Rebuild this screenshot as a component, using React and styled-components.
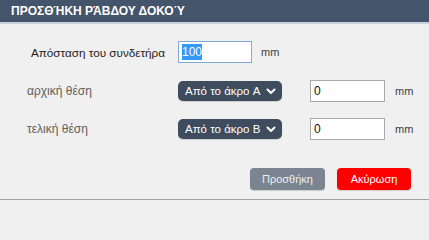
import React from "react";
import styled, { createGlobalStyle } from "styled-components";

const Global = createGlobalStyle`
  html, body { margin: 0; padding: 0; background: #f0f0f0; }
  body { font-family: "Liberation Sans", Arial, sans-serif; }
  * { box-sizing: border-box; }
`;

const Dialog = styled.div`
  width: 429px;
  height: 200px;
  background: #f0f0f0;
  display: flex;
  flex-direction: column;
  border-bottom: 1px solid #a3a3a3;
`;

const Header = styled.div`
  height: 24px;
  flex: none;
  background: #44546a;
  border-bottom: 2px solid #c9d1db;
  color: #ffffff;
  font-weight: bold;
  font-size: 12px;
  padding-left: 11px;
  display: flex;
  align-items: center;
  padding-bottom: 1px;
`;

const Body = styled.div`
  flex: 1;
  display: flex;
  flex-direction: column;
  padding-top: 17px;
`;

const Row = styled.div`
  display: flex;
  align-items: center;
  height: 22px;
  flex: none;
  margin-bottom: ${(p) => p.$gap}px;
`;

const Label = styled.div`
  width: 178px;
  padding-left: ${(p) => (p.$primary ? 31 : 27)}px;
  font-size: ${(p) => (p.$primary ? 11.7 : 12)}px;
  color: ${(p) => (p.$primary ? "#1e1e1e" : "#5e5e5e")};
`;

const Field = styled.div`
  width: ${(p) => p.$w}px;
  height: 22px;
  background: #ffffff;
  border: 1px solid ${(p) => (p.$focused ? "#7fa9d9" : "#a9a9a9")};
  display: flex;
  align-items: center;
  padding-left: 3px;
  font-size: 12px;
  color: #111;
`;

const Selected = styled.span`
  background: #3399ff;
  color: #ffffff;
  padding: 1px 0;
  line-height: 14px;
`;

const Unit = styled.span`
  font-size: 11px;
  color: #3c3c3c;
  margin-left: ${(p) => p.$ml}px;
`;

const Select = styled.div`
  width: 104px;
  height: 20px;
  background: #3e4c5e;
  border-radius: 5px;
  color: #ffffff;
  font-size: 11.5px;
  display: flex;
  align-items: center;
  justify-content: space-between;
  padding: 0 6px 0 7px;
  margin-right: 28px;
  box-shadow: 0 1px 1px rgba(0, 0, 0, 0.15);
`;

const Footer = styled.div`
  display: flex;
  justify-content: flex-end;
  gap: 12px;
  padding-right: 18px;
  margin-top: 28px;
`;

const Button = styled.button`
  width: ${(p) => p.$w}px;
  height: 22px;
  flex: none;
  border: none;
  border-radius: 4px;
  font-family: "Liberation Sans", Arial, sans-serif;
  font-size: 11px;
  color: ${(p) => (p.$danger ? "#ffffff" : "#eef0f2")};
  background: ${(p) => (p.$danger ? "#ff0000" : "#7b8591")};
  box-shadow: 0 1px 1px rgba(0, 0, 0, 0.15);
  padding: 0;
`;

const Chevron = () => (
  <svg width="10" height="7" viewBox="0 0 10 7">
    <path d="M1.5 1.5 L5 5 L8.5 1.5" fill="none" stroke="#fff" strokeWidth="2" strokeLinecap="round" strokeLinejoin="round" />
  </svg>
);

export default function App() {
  return (
    <>
      <Global />
      <Dialog>
        <Header>ΠΡΟΣΘΉΚΗ ΡΆΒΔΟΥ ΔΟΚΟΎ</Header>
        <Body>
          <Row $gap={17}>
            <Label $primary>Απόσταση του συνδετήρα</Label>
            <Field $w={74} $focused>
              <Selected>100</Selected>
            </Field>
            <Unit $ml={9}>mm</Unit>
          </Row>
          <Row $gap={16}>
            <Label>αρχική θέση</Label>
            <Select>
              <span>Από το άκρο A</span>
              <Chevron />
            </Select>
            <Field $w={75}>0</Field>
            <Unit $ml={10}>mm</Unit>
          </Row>
          <Row $gap={0}>
            <Label>τελική θέση</Label>
            <Select>
              <span>Από το άκρο B</span>
              <Chevron />
            </Select>
            <Field $w={75}>0</Field>
            <Unit $ml={10}>mm</Unit>
          </Row>
          <Footer>
            <Button $w={75}>Προσθήκη</Button>
            <Button $w={74} $danger>Ακύρωση</Button>
          </Footer>
        </Body>
      </Dialog>
    </>
  );
}
